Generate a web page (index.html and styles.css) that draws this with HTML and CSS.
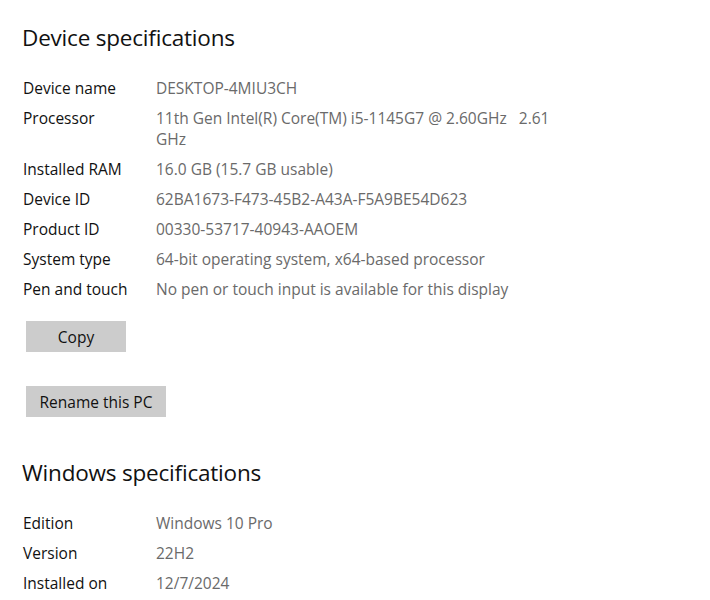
FILE: index.html
```html
<!DOCTYPE html>
<html>
<head>
<meta charset="utf-8">
<link rel="stylesheet" href="styles.css">
</head>
<body>
<div class="page">
  <h2 class="heading">Device specifications</h2>
  <div class="specs">
    <div class="row"><div class="label">Device name</div><div class="value">DESKTOP-4MIU3CH</div></div>
    <div class="row"><div class="label">Processor</div><div class="value">11th Gen Intel(R) Core(TM) i5-1145G7 @ 2.60GHz&nbsp;&nbsp; 2.61 GHz</div></div>
    <div class="row"><div class="label">Installed RAM</div><div class="value">16.0 GB (15.7 GB usable)</div></div>
    <div class="row"><div class="label">Device ID</div><div class="value">62BA1673-F473-45B2-A43A-F5A9BE54D623</div></div>
    <div class="row"><div class="label">Product ID</div><div class="value">00330-53717-40943-AAOEM</div></div>
    <div class="row"><div class="label">System type</div><div class="value">64-bit operating system, x64-based processor</div></div>
    <div class="row"><div class="label">Pen and touch</div><div class="value">No pen or touch input is available for this display</div></div>
  </div>
  <div class="actions">
    <button class="btn btn-copy">Copy</button>
    <button class="btn btn-rename">Rename this PC</button>
  </div>
  <h2 class="heading heading-win">Windows specifications</h2>
  <div class="specs">
    <div class="row"><div class="label">Edition</div><div class="value">Windows 10 Pro</div></div>
    <div class="row"><div class="label">Version</div><div class="value">22H2</div></div>
    <div class="row"><div class="label">Installed on</div><div class="value">12/7/2024</div></div>
  </div>
</div>
</body>
</html>
```

FILE: styles.css
```css
html, body {
  margin: 0;
  padding: 0;
  background: #ffffff;
}
body {
  font-family: "Open Sans", "Noto Sans", sans-serif;
  color: #1a1a1a;
}
.page {
  padding: 22px 0 0 22px;
}
.heading {
  margin: 0;
  font-size: 22.5px;
  line-height: 32px;
  font-weight: 400;
  color: #111;
  letter-spacing: -0.2px;
}
.heading-win {
  margin-top: 40px;
}
.specs {
  margin-top: 19px;
  padding-left: 1px;
}
.row {
  display: grid;
  grid-template-columns: 133px 400px;
  padding: 4.5px 0;
  font-size: 15.5px;
  line-height: 21px;
}
.label {
  color: #111111;
}
.value {
  color: #6a6a6a;
}
.actions {
  display: flex;
  flex-direction: column;
  align-items: flex-start;
  gap: 34px;
  margin-top: 17px;
  padding-left: 4px;
}
.btn {
  border: none;
  background: #cccccc;
  color: #111;
  font-family: inherit;
  font-size: 15.5px;
  height: 31px;
  padding: 0;
}
.btn-copy {
  width: 100px;
}
.btn-rename {
  width: 140px;
}
```
